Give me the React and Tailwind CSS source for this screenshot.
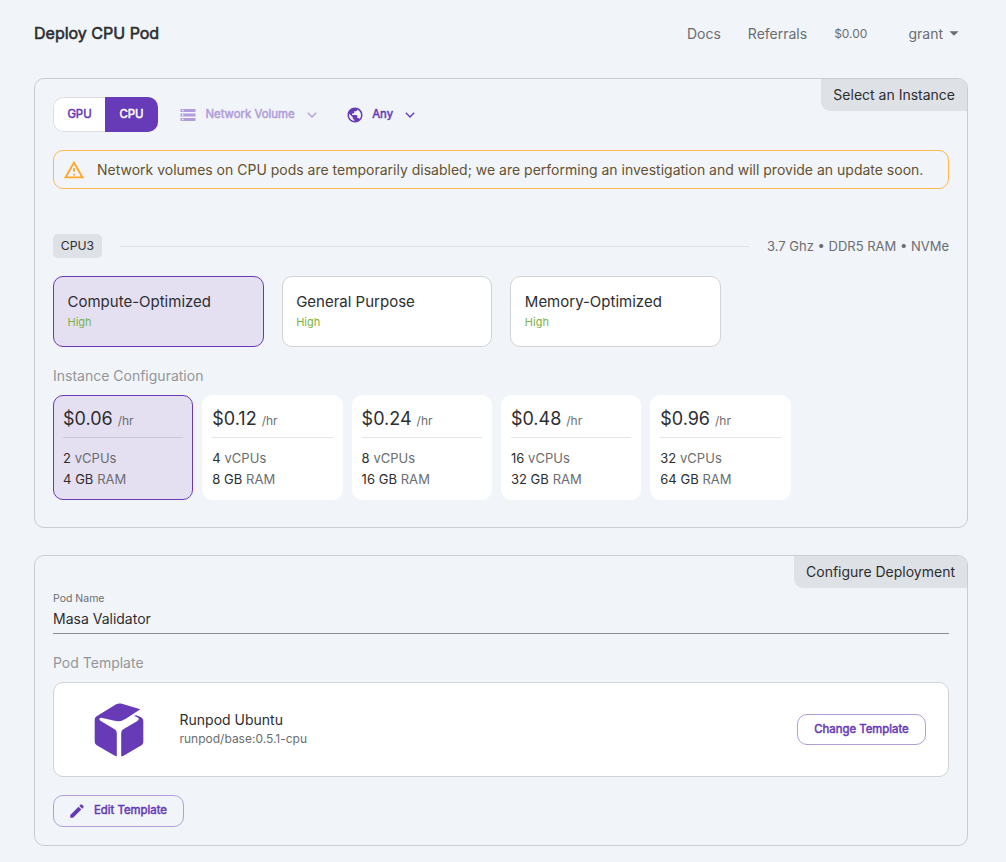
import React from "react";
import { MdStorage, MdPublic, MdOutlineReportProblem, MdEdit, MdArrowDropDown } from "react-icons/md";

const tiers = [
  { name: "Compute-Optimized", stock: "High", selected: true },
  { name: "General Purpose", stock: "High" },
  { name: "Memory-Optimized", stock: "High" },
];

const configs = [
  { price: "$0.06", cpus: "2", ram: "4 GB", selected: true },
  { price: "$0.12", cpus: "4", ram: "8 GB" },
  { price: "$0.24", cpus: "8", ram: "16 GB" },
  { price: "$0.48", cpus: "16", ram: "32 GB" },
  { price: "$0.96", cpus: "32", ram: "64 GB" },
];

function Header() {
  return (
    <header className="flex h-[66px] items-center text-[#6b6d70]">
      <h1 className="text-[16px] leading-6 font-normal text-[#2d2e30] [-webkit-text-stroke:0.6px_#2d2e30]">
        Deploy CPU Pod
      </h1>
      <nav className="ml-auto flex items-center pr-[8px] text-[14px]">
        <a>Docs</a>
        <a className="ml-[27px]">Referrals</a>
        <span className="ml-[27px] pt-px text-[12px]">$0.00</span>
        <button className="ml-[41px] flex items-center">
          grant
          <MdArrowDropDown className="-mr-px size-[22px]" />
        </button>
      </nav>
    </header>
  );
}

function Chevron() {
  return (
    <svg className="ml-[12px] h-[6px] w-[10px]" viewBox="0 0 10 6" fill="none" stroke="currentColor" strokeWidth="1.4">
      <path d="M.8.8 5 5 9.2.8" />
    </svg>
  );
}

function Panel({ title, className, children }) {
  return (
    <section className={`relative mr-[4px] rounded-[10px] border border-[#c9ccd1] px-[18px] ${className}`}>
      <div className="absolute top-0 right-0 flex h-8 items-center rounded-tr-[9px] rounded-bl-[9px] bg-[#dee1e5] px-3 pb-[2px] text-[14px] text-[#2d2e30]">
        {title}
      </div>
      {children}
    </section>
  );
}

function TierCard({ name, stock, selected }) {
  return (
    <div
      className={`h-[71px] rounded-[10px] border px-[13.5px] pt-[14px] ${
        selected ? "border-[#673ab7] bg-[#e4e0f2]" : "border-[#d3d3d5] bg-white"
      }`}
    >
      <div className="text-[15px] leading-[21px] text-[#2d2e30]">{name}</div>
      <div className="mt-[1px] text-[11px] leading-[18px] text-[#7cb342]">{stock}</div>
    </div>
  );
}

function ConfigCard({ price, cpus, ram, selected }) {
  return (
    <div
      className={`h-[105px] rounded-[10px] border px-[9px] pt-[9px] text-[#2d2e30] ${
        selected ? "border-[#673ab7] bg-[#e4e0f2]" : "border-white bg-white"
      }`}
    >
      <div className="flex items-baseline border-b border-black/10 pb-[3px] leading-[27px]">
        <span className="text-[18px]">{price}</span>
        <span className="ml-[5px] text-[12px] text-[#6b6d70]">/hr</span>
      </div>
      <div className="mt-[10px] text-[13px] leading-[21px] tracking-[0.04px]">
        <div>
          {cpus} <span className="text-[#6b6d70]">vCPUs</span>
        </div>
        <div>
          {ram} <span className="text-[#6b6d70]">RAM</span>
        </div>
      </div>
    </div>
  );
}

function TemplateCube() {
  return (
    <svg className="h-[54px] w-[50px]" viewBox="0 0 50 54" fill="#673ab7">
      <path d="M2.6 13.2 22.6 1.1Q24.6 0 27 .6L46.3 6.3 32.2 15.6Q26.5 19.4 20.5 17.8L7.5 14.8Q5.2 14.6 5.4 16.3 5.6 17.5 7.6 18.6L20.6 26.3Q22.8 27.6 22.8 30V53.2Q21.5 53.3 20 52.3L2.7 42.2Q.7 41 .7 38.8V16.5Q.7 14.4 2.6 13.2Z" />
      <path d="M39.7 12.7 42.4 12.2 47 14.3Q49.3 15.5 49.3 18V38.9Q49.3 41.1 47.4 42.2L30 52.5Q28.7 53.4 27.2 53.2V30Q27.2 27.6 29.3 26.3L43 18.3Q45 17 44.7 15.7 44.3 14.3 39.7 12.7Z" />
    </svg>
  );
}

export default function App() {
  return (
    <div className="h-[862px] w-full overflow-hidden bg-[#f1f5fa] px-[34px] font-['Inter',sans-serif] text-[14px] text-[#2d2e30]">
      <Header />
      <Panel title="Select an Instance" className="mt-[12px] h-[450px] pt-[18px]">
        <div className="flex h-[35px] items-center text-[11.4px] text-[#673ab7]">
          <div className="flex h-full w-[105px] overflow-hidden rounded-[10px] [-webkit-text-stroke:0.5px]">
            <button className="w-[52px] rounded-l-[10px] border border-r-0 border-[#dcdee2] bg-white">GPU</button>
            <button className="flex-1 bg-[#673ab7] text-white">CPU</button>
          </div>
          <div className="ml-[20.5px] flex items-center text-[#b19ddb]">
            <MdStorage className="size-[18px]" />
            <span className="ml-[9px] [-webkit-text-stroke:0.5px]">Network Volume</span>
            <Chevron />
          </div>
          <div className="ml-[29px] flex items-center">
            <MdPublic className="size-[18px]" />
            <span className="ml-[8.5px] [-webkit-text-stroke:0.5px]">Any</span>
            <Chevron />
          </div>
        </div>

        <div className="mt-[18px] flex h-[39px] items-center rounded-[10px] border border-[#ffb74d] px-[9px] text-[14px]">
          <MdOutlineReportProblem className="size-[22px] text-[#ffa726]" />
          <span className="ml-[12px] whitespace-nowrap text-[#64512f]">
            Network volumes on CPU pods are temporarily disabled; we are performing an investigation and will provide an
            update soon.
          </span>
        </div>

        <div className="mt-[45px] flex h-6 items-center text-[13px]">
          <span className="flex h-6 w-[49px] items-center justify-center rounded-[5px] bg-[#dee1e5] text-[12.2px]">
            CPU3
          </span>
          <div className="ml-[18px] h-px flex-1 bg-[#dfe3e7]" />
          <span className="ml-[18px] pt-px text-[#6b6d70]">3.7 Ghz • DDR5 RAM • NVMe</span>
        </div>

        <div className="mt-[18px] grid w-[668px] grid-cols-3 gap-[18px]">
          {tiers.map((t) => (
            <TierCard key={t.name} {...t} />
          ))}
        </div>

        <div className="mt-[19px] text-[14px] leading-5 text-[#939598]">Instance Configuration</div>
        <div className="mt-[9px] grid w-[737.5px] grid-cols-5 gap-[9px]">
          {configs.map((c) => (
            <ConfigCard key={c.price} {...c} />
          ))}
        </div>
      </Panel>

      <Panel title="Configure Deployment" className="mt-[27px] h-[291px] pt-[34px]">
        <div className="h-[44px] border-b border-[#8b8e93]">
          <div className="text-[10.5px] leading-[17px] text-[#6b6d70]">Pod Name</div>
          <div className="mt-[2px] text-[14px] leading-[20px]">Masa Validator</div>
        </div>
        <div className="mt-[19px] text-[14px] leading-5 text-[#939598]">Pod Template</div>
        <div className="mt-[9px] flex h-[95px] items-center rounded-[10px] border border-[#d3d3d5] bg-white pr-[22px] pl-[40px]">
          <TemplateCube />
          <div className="ml-[35.5px] pb-[2px]">
            <div className="text-[14px] leading-[20px]">Runpod Ubuntu</div>
            <div className="text-[12px] leading-[18px] text-[#6b6d70]">runpod/base:0.5.1-cpu</div>
          </div>
          <button className="ml-auto h-[31px] w-[129px] rounded-[10px] border border-[#b39ddb] text-[11.4px] text-[#673ab7] [-webkit-text-stroke:0.5px]">
            Change Template
          </button>
        </div>
        <button className="mt-[18px] flex h-8 w-[131px] items-center rounded-[10px] border border-[#b39ddb] pl-[14px] text-[11.4px] text-[#673ab7]">
          <MdEdit className="size-[18px]" />
          <span className="ml-[8px] pb-px [-webkit-text-stroke:0.5px]">Edit Template</span>
        </button>
      </Panel>
    </div>
  );
}
